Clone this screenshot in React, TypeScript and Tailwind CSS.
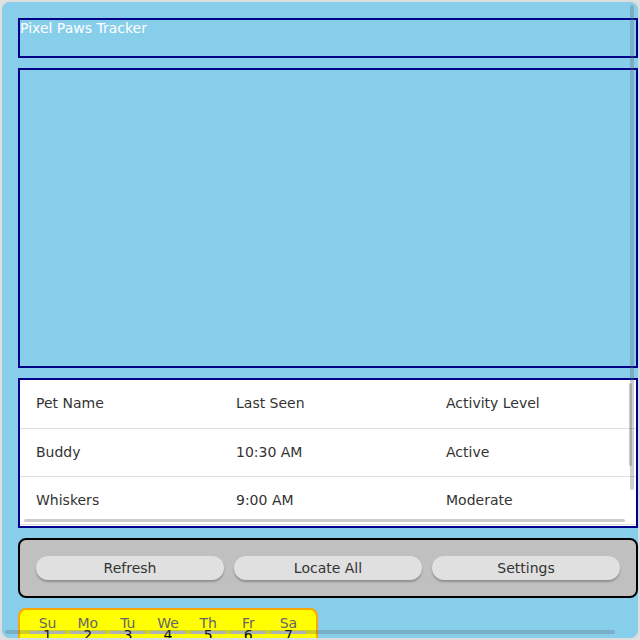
import React from "react";

const pets = [
  { name: "Buddy", seen: "10:30 AM", level: "Active" },
  { name: "Whiskers", seen: "9:00 AM", level: "Moderate" },
  { name: "Luna", seen: "8:15 AM", level: "Resting" },
  { name: "Max", seen: "7:45 AM", level: "Sleeping" },
];

const days = ["Su", "Mo", "Tu", "We", "Th", "Fr", "Sa"];

const font = "font-['DejaVu_Sans',sans-serif]";

export default function App() {
  return (
    <div className="relative h-[640px] w-[640px] bg-[#e0e0e0]">
      <div className="h-full w-full overflow-auto rounded-[10px] border-2 border-[#ddd] bg-[#87CEEB] p-4">
        <div className={`h-[40px] w-[620px] border-2 border-[#00008B] text-[14px] leading-[16px] text-white ${font}`}>
          Pixel Paws Tracker
        </div>

        <div className="mt-[10px] h-[300px] w-[620px] border-2 border-[#00008B]" />

        <div className="relative mt-[10px] w-[620px]">
          <div className={`h-[150px] overflow-auto border-2 border-[#00008B] bg-white text-[14px] text-[#333] ${font}`}>
            <table className="w-[620px] border-collapse text-left">
              <tbody>
                <tr className="h-[48px] border-b border-[#ddd]">
                  <td className="w-[200px] px-4">Pet Name</td>
                  <td className="w-[210px] px-4">Last Seen</td>
                  <td className="px-4">Activity Level</td>
                </tr>
                {pets.map((p) => (
                  <tr key={p.name} className="h-[48px] border-b border-[#ddd]">
                    <td className="px-4">{p.name}</td>
                    <td className="px-4">{p.seen}</td>
                    <td className="px-4">{p.level}</td>
                  </tr>
                ))}
              </tbody>
            </table>
          </div>
          {/* table scrollbars */}
          <div className="absolute top-[5px] right-[6px] h-[83px] w-[3px] rounded-full bg-black/20" />
          <div className="absolute bottom-[6px] left-[6px] h-[3px] w-[601px] rounded-full bg-black/20" />
        </div>

        <div className={`mt-[10px] flex w-[620px] gap-[10px] rounded-lg border-2 border-black bg-[#c0c0c0] p-4 text-[14px] text-[#333] ${font}`}>
          {["Refresh", "Locate All", "Settings"].map((b) => (
            <button
              key={b}
              className="h-[24px] flex-1 rounded-xl bg-[#e0e0e0] leading-[24px] shadow-[0_2px_2px_rgba(0,0,0,0.25)]"
            >
              {b}
            </button>
          ))}
        </div>

        <div className={`mt-[10px] w-[300px] rounded-lg border-2 border-[#FFA500] bg-[#ffff00] px-[10px] pt-[8px] pb-3 text-[14px] ${font}`}>
          <div className="grid grid-cols-7 gap-x-[5px] gap-y-[3px]">
            {days.map((d) => (
              <div key={d} className="h-[10px] text-center leading-[10px] text-[#666]">
                {d}
              </div>
            ))}
            {Array.from({ length: 35 }, (_, i) => (
              <div key={i} className="h-[30px] border-t-[3px] border-[#d4d4d4] text-center text-black">
                <span className="-mt-[6px] block leading-[14px]">{i < 30 ? i + 1 : ""}</span>
              </div>
            ))}
          </div>
        </div>
      </div>
      {/* page scrollbars */}
      <div className="absolute top-[5px] left-[630px] h-[485px] w-[4px] rounded-full bg-[rgba(90,100,110,0.3)]" />
      <div className="absolute top-[630px] left-[5px] h-[4px] w-[610px] rounded-full bg-[rgba(90,100,110,0.3)]" />
    </div>
  );
}
